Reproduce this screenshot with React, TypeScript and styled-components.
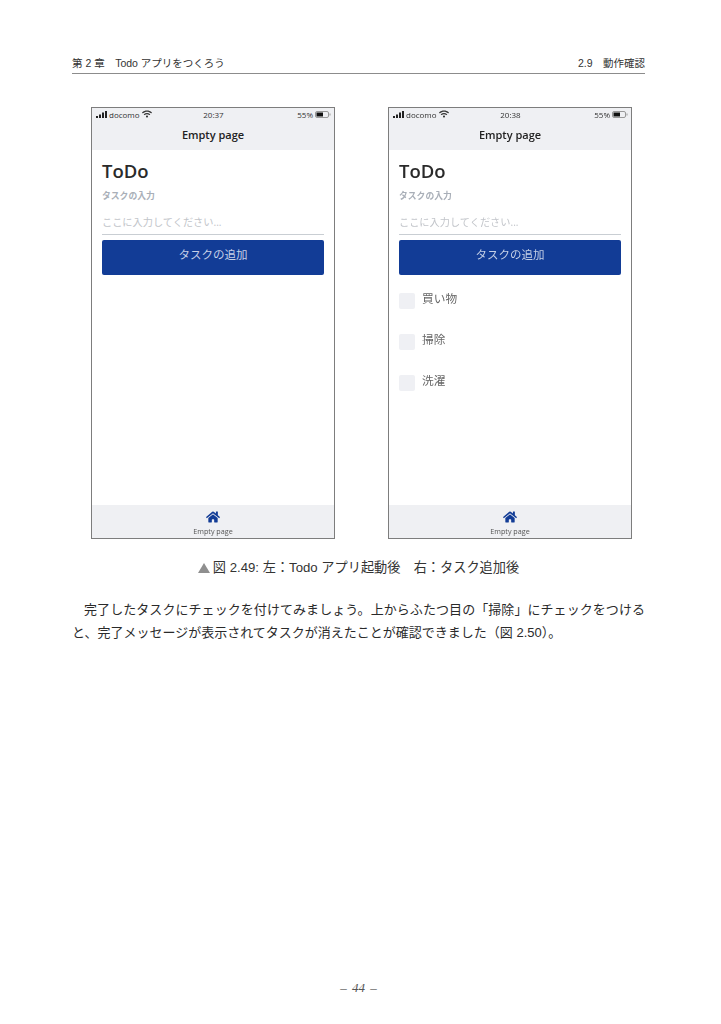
import React from "react";
import styled, { createGlobalStyle } from "styled-components";
import { FaHome, FaWifi } from "react-icons/fa";

const GlobalStyle = createGlobalStyle`
  html, body {
    margin: 0;
    padding: 0;
    background: #fff;
  }
  body {
    font-family: "Liberation Sans", "Noto Sans CJK JP", sans-serif;
    color: #222;
  }
`;

const Page = styled.div`
  width: 721px;
  height: 1024px;
  box-sizing: border-box;
  padding: 55px 76px 0 72px;
  display: flex;
  flex-direction: column;
  overflow: hidden;
`;

const RunningHead = styled.header`
  display: flex;
  justify-content: space-between;
  align-items: center;
  height: 18px;
  border-bottom: 1px solid #8c8c8c;
  font-size: 10.5px;
  line-height: 14px;
  color: #333;
`;

const HeadPart = styled.span`
  white-space: pre;
  padding-bottom: 2px;
`;

const Figure = styled.div`
  display: flex;
  justify-content: space-between;
  margin: 33px 13px 0 19px;
  filter: blur(0.35px);
`;

const Phone = styled.div`
  width: 244px;
  height: 432px;
  box-sizing: border-box;
  border: 1px solid #7d7d7d;
  display: flex;
  flex-direction: column;
  background: #fff;
  font-family: "Open Sans", "Noto Sans CJK JP", sans-serif;
`;

const TopBar = styled.div`
  height: 42px;
  flex: none;
  background: #eff0f3;
  display: flex;
  flex-direction: column;
`;

const StatusBar = styled.div`
  height: 12px;
  padding: 0 3px 0 4px;
  display: grid;
  grid-template-columns: 1fr auto 1fr;
  align-items: center;
  font-size: 8px;
  color: #333;
`;

const StatusLeft = styled.div`
  display: flex;
  align-items: center;
  gap: 2px;
`;

const StatusRight = styled.div`
  display: flex;
  align-items: center;
  justify-content: flex-end;
  gap: 2px;
`;

const NavTitle = styled.div`
  flex: 1;
  display: flex;
  align-items: center;
  justify-content: center;
  padding-bottom: 2px;
  font-size: 11px;
  font-weight: 600;
  color: #222;
`;

const Content = styled.div`
  flex: 1;
  padding: 8px 10px 0;
  display: flex;
  flex-direction: column;
`;

const Title = styled.div`
  font-size: 18.5px;
  line-height: 26px;
  font-weight: 600;
  color: #2a2a2a;
`;

const FieldLabel = styled.div`
  margin-top: 5px;
  font-size: 8.8px;
  line-height: 14px;
  font-weight: 700;
  color: #a9afb8;
`;

const Placeholder = styled.div`
  margin-top: 10px;
  height: 21px;
  font-size: 10.2px;
  line-height: 18px;
  color: #c2c5ca;
  border-bottom: 1px solid #c9ced3;
`;

const AddButton = styled.div`
  margin-top: 5px;
  height: 35px;
  border-radius: 2px;
  background: #123c96;
  color: #c5d0e6;
  display: flex;
  align-items: center;
  justify-content: center;
  padding-bottom: 7px;
  box-sizing: border-box;
  font-size: 11.5px;
`;

const TaskList = styled.div`
  margin-top: 18px;
  display: flex;
  flex-direction: column;
  gap: 25px;
`;

const TaskRow = styled.div`
  display: flex;
  gap: 7px;
  height: 16px;
`;

const Check = styled.div`
  width: 16px;
  height: 16px;
  border-radius: 2px;
  background: #eff0f4;
`;

const TaskText = styled.span`
  font-size: 11.7px;
  line-height: 12px;
  margin-top: -1px;
  color: #666;
`;

const TabBar = styled.div`
  height: 33px;
  flex: none;
  background: #eff0f3;
  display: flex;
  flex-direction: column;
  align-items: center;
  padding-top: 5px;
  box-sizing: border-box;
  color: #123c96;
`;

const TabLabel = styled.div`
  font-size: 7.2px;
  line-height: 9px;
  margin-top: 3px;
  color: #555;
`;

const Caption = styled.div`
  margin-top: 21px;
  display: flex;
  justify-content: center;
  align-items: center;
  font-size: 13.2px;
  line-height: 16px;
  white-space: pre;
  color: #333;
`;

const Triangle = styled.span`
  width: 0;
  height: 0;
  margin-right: 3px;
  border-left: 6px solid transparent;
  border-right: 6px solid transparent;
  border-bottom: 10px solid #8f8f8f;
`;

const Body = styled.div`
  margin-top: 22px;
  font-size: 13px;
  line-height: 23px;
  color: #2a2a2a;
`;

const BodyLine = styled.div<{ $indent?: boolean; $fill?: boolean }>`
  white-space: nowrap;
  padding-left: ${(p) => (p.$indent ? "12px" : "0")};
  text-align: ${(p) => (p.$fill ? "justify" : "left")};
  text-align-last: ${(p) => (p.$fill ? "justify" : "left")};
`;

const Folio = styled.div`
  margin-top: auto;
  margin-bottom: 28px;
  text-align: center;
  font-family: "Liberation Serif", serif;
  font-size: 13px;
  line-height: 16px;
  word-spacing: 2px;
  font-style: italic;
  color: #555;
`;

const Signal = () => (
  <svg width="11" height="7" viewBox="0 0 11 7" fill="#222">
    <rect x="0" y="5" width="2" height="2" />
    <rect x="3" y="3.5" width="2" height="3.5" />
    <rect x="6" y="1.5" width="2" height="5.5" />
    <rect x="9" y="0" width="2" height="7" />
  </svg>
);

const Battery = () => (
  <svg width="16" height="7" viewBox="0 0 16 7">
    <rect x="0.5" y="0.5" width="13" height="6" rx="1.5" fill="none" stroke="#999" />
    <rect x="1.5" y="1.5" width="6.5" height="4" fill="#111" />
    <rect x="14.5" y="2.5" width="1" height="2" fill="#999" />
  </svg>
);

type ScreenProps = { time: string; tasks: string[] };

const Screen = ({ time, tasks }: ScreenProps) => (
  <Phone>
    <TopBar>
      <StatusBar>
        <StatusLeft>
          <Signal />
          docomo
          <FaWifi size={10} />
        </StatusLeft>
        <span>{time}</span>
        <StatusRight>
          55%
          <Battery />
        </StatusRight>
      </StatusBar>
      <NavTitle>Empty page</NavTitle>
    </TopBar>
    <Content>
      <Title>ToDo</Title>
      <FieldLabel>タスクの入力</FieldLabel>
      <Placeholder>ここに入力してください...</Placeholder>
      <AddButton>タスクの追加</AddButton>
      {tasks.length > 0 && (
        <TaskList>
          {tasks.map((t) => (
            <TaskRow key={t}>
              <Check />
              <TaskText>{t}</TaskText>
            </TaskRow>
          ))}
        </TaskList>
      )}
    </Content>
    <TabBar>
      <FaHome size={14} />
      <TabLabel>Empty page</TabLabel>
    </TabBar>
  </Phone>
);

export default function App() {
  return (
    <Page>
      <GlobalStyle />
      <RunningHead>
        <HeadPart>第 2 章　Todo アプリをつくろう</HeadPart>
        <HeadPart>2.9　動作確認</HeadPart>
      </RunningHead>
      <Figure>
        <Screen time="20:37" tasks={[]} />
        <Screen time="20:38" tasks={["買い物", "掃除", "洗濯"]} />
      </Figure>
      <Caption>
        <Triangle />図 2.49: 左：Todo アプリ起動後　右：タスク追加後
      </Caption>
      <Body>
        <BodyLine $indent $fill>
          完了したタスクにチェックを付けてみましょう。上からふたつ目の「掃除」にチェックをつける
        </BodyLine>
        <BodyLine>
          と、完了メッセージが表示されてタスクが消えたことが確認できました（図 2.50）。
        </BodyLine>
      </Body>
      <Folio>– 44 –</Folio>
    </Page>
  );
}
